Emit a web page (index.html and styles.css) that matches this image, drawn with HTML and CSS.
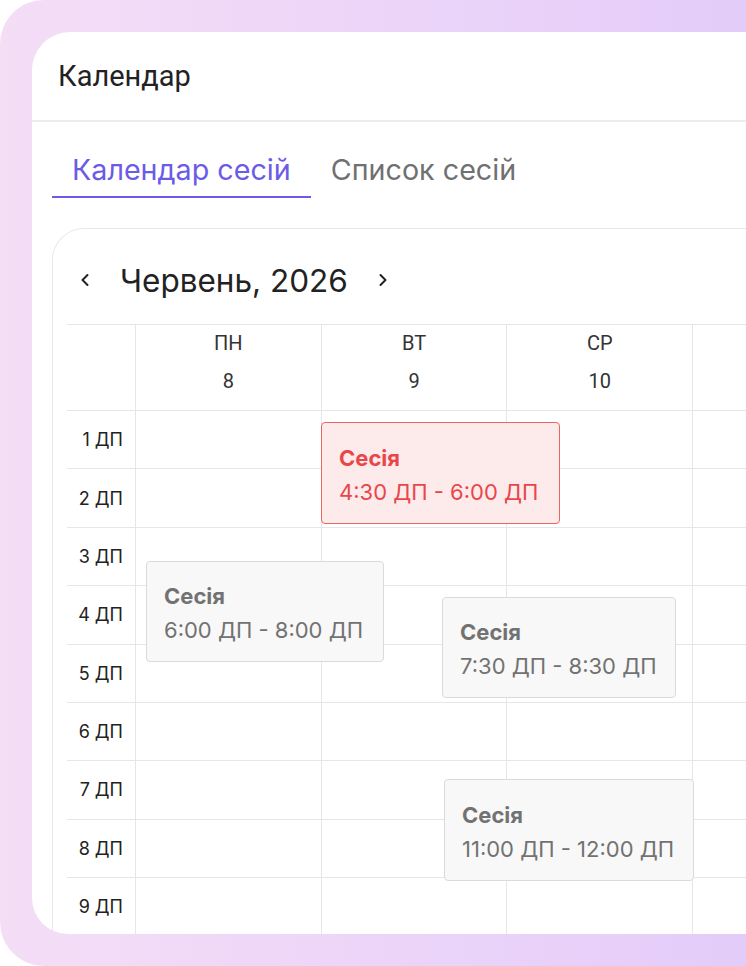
FILE: index.html
```html
<!DOCTYPE html>
<html>
	<head>
		<meta charset="UTF-8">
		<title>Календар</title>
		<link rel="stylesheet" href="styles.css">
	</head>
	<body>
		<div class="frame">
			<div class="app">
				<div class="app-head">Календар</div>

				<div class="tabs">
					<div class="tab tab-active">Календар сесій</div>
					<div class="tab">Список сесій</div>
				</div>

				<div class="cal">
					<div class="cal-nav">
						<svg class="chev" width="10" height="14" viewBox="0 0 10 14"><path d="M7.5 2 L2.5 7 L7.5 12" fill="none" stroke="#222" stroke-width="2" stroke-linecap="round" stroke-linejoin="round"/></svg>
						<span class="cal-month">Червень, 2026</span>
						<svg class="chev" width="10" height="14" viewBox="0 0 10 14"><path d="M2.5 2 L7.5 7 L2.5 12" fill="none" stroke="#222" stroke-width="2" stroke-linecap="round" stroke-linejoin="round"/></svg>
					</div>

					<div class="grid">
						<div class="cell gutter"></div>
						<div class="cell day"><span>ПН</span><span>8</span></div>
						<div class="cell day"><span>ВТ</span><span>9</span></div>
						<div class="cell day"><span>СР</span><span>10</span></div>
						<div class="cell day"></div>

						<div class="cell gutter hour">1 ДП</div><div class="cell"></div><div class="cell"></div><div class="cell"></div><div class="cell"></div>
						<div class="cell gutter hour">2 ДП</div><div class="cell"></div><div class="cell"></div><div class="cell"></div><div class="cell"></div>
						<div class="cell gutter hour">3 ДП</div><div class="cell"></div><div class="cell"></div><div class="cell"></div><div class="cell"></div>
						<div class="cell gutter hour">4 ДП</div><div class="cell"></div><div class="cell"></div><div class="cell"></div><div class="cell"></div>
						<div class="cell gutter hour">5 ДП</div><div class="cell"></div><div class="cell"></div><div class="cell"></div><div class="cell"></div>
						<div class="cell gutter hour">6 ДП</div><div class="cell"></div><div class="cell"></div><div class="cell"></div><div class="cell"></div>
						<div class="cell gutter hour">7 ДП</div><div class="cell"></div><div class="cell"></div><div class="cell"></div><div class="cell"></div>
						<div class="cell gutter hour">8 ДП</div><div class="cell"></div><div class="cell"></div><div class="cell"></div><div class="cell"></div>
						<div class="cell gutter hour">9 ДП</div><div class="cell"></div><div class="cell"></div><div class="cell"></div><div class="cell"></div>

						<!-- sessions lie over the grid -->
						<div class="event event-red ev1">
							<div class="ev-title">Сесія</div>
							<div class="ev-time">4:30 ДП - 6:00 ДП</div>
						</div>
						<div class="event ev2">
							<div class="ev-title">Сесія</div>
							<div class="ev-time">6:00 ДП - 8:00 ДП</div>
						</div>
						<div class="event ev3">
							<div class="ev-title">Сесія</div>
							<div class="ev-time">7:30 ДП - 8:30 ДП</div>
						</div>
						<div class="event ev4">
							<div class="ev-title">Сесія</div>
							<div class="ev-time">11:00 ДП - 12:00 ДП</div>
						</div>
					</div>
				</div>
			</div>
		</div>
	</body>
</html>
```

FILE: styles.css
```css
body {
	margin: 0;
	background: #fff;
	overflow: hidden;
	font-family: Inter, "Noto Sans", sans-serif;
}

.frame {
	height: 966px;
	padding: 32px 0 0 32px;
	box-sizing: border-box;
	border-radius: 44px 0 0 44px;
	background: linear-gradient(90deg, #f4def6, #e4ccfa);
	overflow: hidden;
}

.app {
	width: 1200px;
	height: 902px;
	background: #fff;
	border-radius: 38px 0 0 36px;
	overflow: hidden;
}

.app-head {
	height: 88px;
	display: flex;
	align-items: center;
	padding-left: 26px;
	border-bottom: 2px solid #ececec;
	font-family: Roboto, sans-serif;
	font-size: 29px;
	color: #222;
}

.tabs {
	display: flex;
	padding-left: 20px;
}

.tab {
	padding: 30px 20px 8px;
	line-height: 36px;
	font-size: 28.7px;
	color: #707070;
	border-bottom: 2px solid transparent;
}

.tab-active {
	color: #6b5be6;
	border-bottom-color: #6b5be6;
}

.cal {
	margin: 30px 0 0 20px;
	height: 900px;
	border: 1px solid #e8e8e8;
	border-right: none;
	border-radius: 32px 0 0 0;
}

.cal-nav {
	height: 95px;
	box-sizing: border-box;
	display: flex;
	align-items: center;
	gap: 30px;
	padding: 7px 0 0 27px;
}

.cal-month {
	font-size: 31.5px;
	color: #222;
}

.grid {
	position: relative;
	margin-left: 14px;
	display: grid;
	grid-template-columns: 68px repeat(4, 185.7px);
	grid-template-rows: 86px repeat(9, 58.375px);
}

.cell {
	box-sizing: border-box;
	border-top: 1px solid #e6e6e6;
	border-left: 1px solid #e6e6e6;
}

.gutter {
	border-left: none;
}

.day {
	display: flex;
	flex-direction: column;
	align-items: center;
	gap: 14px;
	padding-top: 6px;
	font-family: Roboto, sans-serif;
	font-size: 20px;
	line-height: 24px;
	color: #333;
}

.hour {
	display: flex;
	align-items: center;
	justify-content: flex-end;
	padding-right: 12px;
	font-size: 18px;
	color: #222;
}

.event {
	position: absolute;
	box-sizing: border-box;
	display: flex;
	flex-direction: column;
	justify-content: center;
	gap: 4px;
	padding: 3px 0 0 17px;
	background: #f8f8f8;
	border: 1px solid #dadada;
	border-radius: 4px;
	color: #727272;
	font-size: 22px;
	line-height: 30px;
}

.ev-title {
	font-weight: 700;
}

.event-red {
	background: #fdeaea;
	border-color: #ec6464;
	color: #e8474a;
}

.ev1 { left: 254px; top: 98px; width: 239px; height: 102px; }
.ev2 { left: 79px; top: 237px; width: 238px; height: 101px; }
.ev3 { left: 375px; top: 273px; width: 234px; height: 101px; }
.ev4 { left: 377px; top: 455px; width: 250px; height: 102px; }
```
